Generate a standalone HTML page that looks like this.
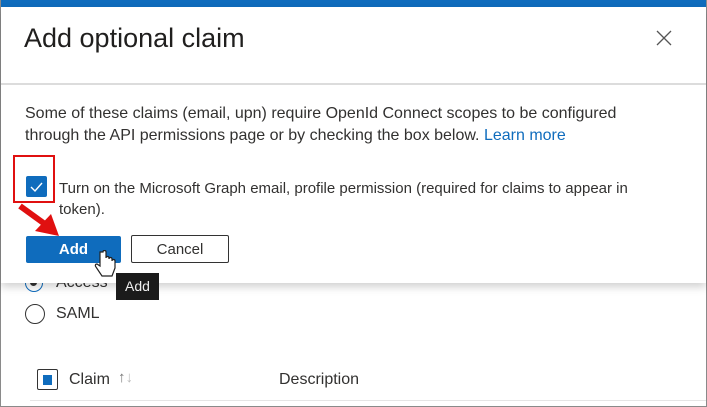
<!DOCTYPE html>
<html><head><style>
body{margin:0;width:707px;height:407px;overflow:hidden;background:#fff;font-family:"Liberation Sans",sans-serif;color:#323130;position:relative}
.frame{position:absolute;left:0;top:0;width:705px;height:405px;border:1px solid #8a8a8a}
.a{position:absolute;white-space:nowrap}
</style></head><body>
<div class="frame"></div>
<div class="a" style="left:1px;top:0;width:705px;height:7px;background:#0f6cbd"></div>
<div class="a" style="left:25px;top:274px;width:16px;height:16px;border:1.5px solid #0f6cbd;border-radius:50%"></div>
<div class="a" style="left:30px;top:279px;width:7px;height:7px;background:#333;border-radius:50%"></div>
<div class="a" style="left:56px;top:274px;font-size:16px">Access</div>
<div class="a" style="left:25px;top:304px;width:18px;height:18px;border:1.5px solid #333;border-radius:50%"></div>
<div class="a" style="left:56px;top:305px;font-size:16px">SAML</div>
<div class="a" style="left:37px;top:369px;width:19px;height:19px;border:1.5px solid #333;border-radius:2px"></div>
<div class="a" style="left:43px;top:375px;width:9px;height:10px;background:#0f6cbd"></div>
<div class="a" style="left:69px;top:371px;font-size:16px">Claim</div>
<div class="a" style="left:118px;top:369px;font-size:15px;color:#777">↑<span style="color:#bbb">↓</span></div>
<div class="a" style="left:279px;top:371px;font-size:16px">Description</div>
<div class="a" style="left:30px;top:400px;width:676px;height:1px;background:#e5e5e5"></div>
<div class="a" style="left:1px;top:7px;width:705px;height:276px;background:#fff;box-shadow:0 4px 8px rgba(0,0,0,.18)"></div>
<div class="a" style="left:24px;top:23px;font-size:27px;color:#201f1e">Add optional claim</div>
<div class="a" style="left:654px;top:28px;width:20px;height:20px">
<svg width="20" height="20"><path d="M3 3L17 17M17 3L3 17" stroke="#555" stroke-width="1.3"/></svg></div>
<div class="a" style="left:1px;top:83px;width:705px;height:2px;background:#dcdcdc"></div>
<div class="a" style="left:25px;top:103px;font-size:16px;line-height:22px">Some of these claims (email, upn) require OpenId Connect scopes to be configured<br>through the API permissions page or by checking the box below. <span style="color:#0f6cbd">Learn more</span></div>
<div class="a" style="left:26px;top:176px;width:21px;height:21px;background:#0f6cbd;border-radius:2px">
<svg width="21" height="21"><path d="M5 11L9 15L16 7" stroke="#fff" stroke-width="1.4" fill="none"/></svg></div>
<div class="a" style="left:13px;top:155px;width:38px;height:44px;border:2px solid #e01010"></div>
<div class="a" style="left:59px;top:178px;font-size:15px;line-height:21px">Turn on the Microsoft Graph email, profile permission (required for claims to appear in<br>token).</div>
<svg class="a" style="left:15px;top:200px" width="50" height="40"><path d="M5 6L34 27" stroke="#e01010" stroke-width="6"/><path d="M20 31L44 36L36 14Z" fill="#e01010"/></svg>
<div class="a" style="left:26px;top:236px;width:95px;height:27px;background:#0f6cbd;border-radius:2px;color:#fff;font-weight:bold;font-size:15px;text-align:center;line-height:27px">Add</div>
<div class="a" style="left:131px;top:235px;width:96px;height:26px;border:1.5px solid #333;border-radius:2px;font-size:15px;text-align:center;line-height:27px">Cancel</div>
<svg class="a" style="left:94px;top:250px" width="24" height="30"><path d="M6 2v14l-3-2c-2 0-2 2-1 3l6 9h10l3-8v-7c0-2-3-2-3 0v-2c0-2-3-2-3 0v-1c0-2-3-2-3 0V2c0-2-3-2-3 0z" fill="#fff" stroke="#222" stroke-width="1.2"/></svg>
<div class="a" style="left:116px;top:273px;width:43px;height:27px;background:#1b1b1b;color:#eee;font-size:14px;text-align:center;line-height:27px">Add</div>
</body></html>
